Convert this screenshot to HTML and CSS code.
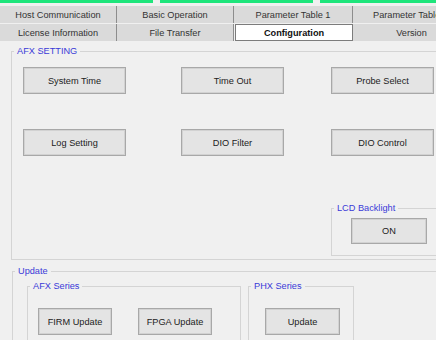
FILE: index.html
```html
<!DOCTYPE html>
<html lang="en">
<head>
    <meta charset="UTF-8">
    <title>Configuration</title>
    <link rel="stylesheet" href="styles.css">
</head>
<body>
    <div class="topbar">
        <div class="seg seg1"></div>
        <div class="seg seg2"></div>
        <div class="seg seg3"></div>
    </div>

    <div class="tabs">
        <div class="tab">Host Communication</div>
        <div class="tab">Basic Operation</div>
        <div class="tab">Parameter Table 1</div>
        <div class="tab">Parameter Table 2</div>
        <div class="tab">License Information</div>
        <div class="tab">File Transfer</div>
        <div class="tab selected">Configuration</div>
        <div class="tab">Version</div>
    </div>

    <fieldset class="group afx-setting">
        <legend>AFX SETTING</legend>
        <div class="btn-grid">
            <button class="btn">System Time</button>
            <button class="btn">Time Out</button>
            <button class="btn">Probe Select</button>
            <button class="btn">Log Setting</button>
            <button class="btn">DIO Filter</button>
            <button class="btn">DIO Control</button>
        </div>
        <fieldset class="group lcd">
            <legend>LCD Backlight</legend>
            <button class="btn btn-on">ON</button>
        </fieldset>
    </fieldset>

    <fieldset class="group update">
        <legend>Update</legend>
        <div class="series-row">
            <fieldset class="group series afx-series">
                <legend>AFX Series</legend>
                <div class="series-btns">
                    <button class="btn btn-small">FIRM Update</button>
                    <button class="btn btn-small">FPGA Update</button>
                </div>
            </fieldset>
            <fieldset class="group series phx-series">
                <legend>PHX Series</legend>
                <div class="series-btns phx-btns">
                    <button class="btn btn-small">Update</button>
                </div>
            </fieldset>
        </div>
    </fieldset>
</body>
</html>
```

FILE: styles.css
```css
html, body {
    margin: 0;
    width: 436px;
    height: 340px;
    overflow: hidden;
}
body {
    font-family: "Liberation Sans", Arial, sans-serif;
    font-size: 9.2px;
    color: #222;
    background-color: #f0f0f0;
}
.topbar {
    display: flex;
    height: 3px;
    gap: 7px;
}
.seg {
    background: #1ee57b;
}
.seg1 { width: 153px; }
.seg2 { width: 153px; }
.seg3 { flex: 1; }

.tabs {
    margin-top: 3px;
    display: grid;
    grid-template-columns: 117px 117px 119px 83px;
    grid-auto-rows: 17px;
    row-gap: 1px;
    overflow: hidden;
}
.tab {
    background: #dadada;
    border-right: 1px solid #8d8d8d;
    box-sizing: border-box;
    display: flex;
    align-items: center;
    justify-content: center;
    white-space: nowrap;
    overflow: hidden;
    color: #333;
}
.tab:nth-child(4) {
    justify-content: flex-start;
    padding-left: 20px;
    border-right: none;
}
.tab:nth-child(8) {
    border-right: none;
    padding-left: 34px;
}
.tab.selected {
    background: white;
    border: 1px solid #7c7c7c;
    margin-left: 1px;
    font-weight: bold;
    color: #111;
}

.group {
    border: 1px solid #d4d4d4;
    margin: 0;
    padding: 0;
    min-width: 0;
    box-sizing: border-box;
}
.group legend {
    margin-left: 2px;
    padding: 0 3px;
    line-height: 13px;
    color: #3a3ad8;
}
.afx-setting {
    margin: 4px 0 0 11px;
    width: 425px;
    border-right: none;
}
.btn-grid {
    display: grid;
    grid-template-columns: 158px 150px 103px;
    grid-auto-rows: 27px;
    row-gap: 35px;
    padding: 9px 0 0 11px;
}
.btn {
    font-family: inherit;
    font-size: 9.2px;
    color: #222;
    width: 103px;
    height: 27px;
    padding: 0;
    background: #e4e4e4;
    border: 1px solid #a8a8a8;
    box-shadow: inset 0 0 0 1px #d2d2d2;
    box-sizing: border-box;
}
.lcd {
    margin: 46px 0 3px 319px;
    width: 105px;
    padding: 0 0 11px 0;
    border-right: none;
}
.btn-on {
    margin: 3px 0 0 19px;
    width: 76px;
    height: 26px;
    display: block;
}
.update {
    margin: 5px 0 0 12px;
    width: 424px;
    height: 75px;
    border-right: none;
    border-bottom: none;
}
.series-row {
    display: flex;
    gap: 7px;
    padding: 2px 0 0 14px;
}
.series {
    height: 60px;
    border-bottom: none;
}
.afx-series { width: 214px; }
.phx-series { width: 106px; }
.series-btns {
    display: flex;
    gap: 26px;
    padding: 15px 0 0 10px;
}
.phx-btns {
    padding-left: 16px;
}
.btn-small {
    width: 74px;
}
.phx-btns .btn-small {
    width: 75px;
}
```
